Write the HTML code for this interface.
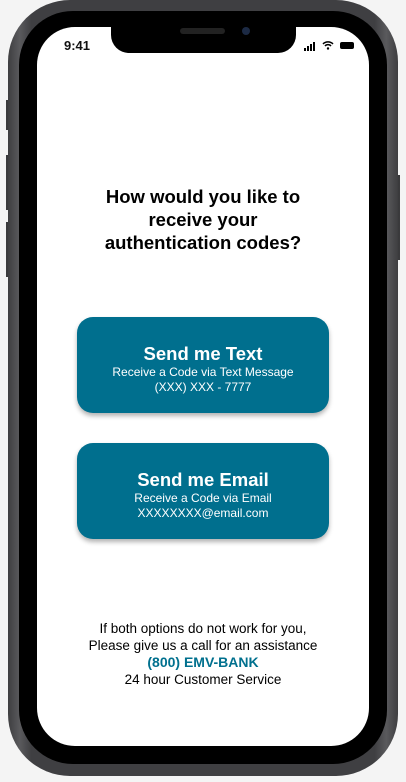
<!DOCTYPE html>
<html><head><style>
body{margin:0;width:406px;height:782px;background:#f4f4f4;position:relative;overflow:hidden;font-family:"Liberation Sans",sans-serif}
.frame{position:absolute;left:8px;top:0;width:390px;height:776px;border-radius:62px;background:linear-gradient(90deg,#3e3e40,#5a5a5d 3%,#3f3f42 6%,#3f3f42 94%,#5a5a5d 97%,#3e3e40)}
.bezel{position:absolute;left:19px;top:11px;width:368px;height:753px;border-radius:54px;background:#000}
.screen{position:absolute;left:37px;top:27px;width:332px;height:719px;border-radius:38px;background:#fff;overflow:hidden}
.notch{position:absolute;left:74px;top:-2px;width:185px;height:28px;background:#000;border-radius:0 0 18px 18px}
.btn{position:absolute;left:40px;width:252px;height:96px;border-radius:16px;background:#006f8e;color:#fff;text-align:center;box-shadow:0 3px 5px rgba(0,0,0,.3)}
.btn b{display:block;font-size:18.5px;margin-top:26px;line-height:22px}
.btn span{display:block;font-size:12px;line-height:15px}
.side{position:absolute;background:#3a3a3c;width:3px}
</style></head><body>
<div class="side" style="left:6px;top:100px;height:30px"></div>
<div class="side" style="left:6px;top:155px;height:55px"></div>
<div class="side" style="left:6px;top:222px;height:55px"></div>
<div class="side" style="left:397px;top:175px;height:85px"></div>
<div class="frame"></div>
<div class="bezel"></div>
<div class="screen">
<div class="notch"><div style="position:absolute;left:69px;top:3px;width:45px;height:6px;border-radius:3px;background:#222"></div><div style="position:absolute;left:131px;top:2px;width:8px;height:8px;border-radius:50%;background:#1c2a44"></div></div>
<div style="position:absolute;left:27px;top:11px;font-size:13px;font-weight:bold;color:#111">9:41</div>
<div style="position:absolute;left:267px;top:15px;display:flex;align-items:flex-end;gap:1px">
<div style="width:2px;height:3px;background:#000"></div><div style="width:2px;height:5px;background:#000"></div><div style="width:2px;height:7px;background:#000"></div><div style="width:2px;height:9px;background:#000"></div></div>
<svg style="position:absolute;left:285px;top:13px" width="12" height="10" viewBox="0 0 12 10"><path d="M1 4a7 7 0 0 1 10 0M3 6a4 4 0 0 1 6 0" stroke="#000" stroke-width="1.5" fill="none"/><circle cx="6" cy="8.5" r="1.2"/></svg>
<div style="position:absolute;left:303px;top:15px;width:14px;height:7px;background:#000;border-radius:2px"></div>
<div style="position:absolute;left:0;width:332px;top:158px;text-align:center;font-size:18.5px;font-weight:bold;line-height:23px;color:#000">How would you like to<br>receive your<br>authentication codes?</div>
<div class="btn" style="top:290px"><b>Send me Text</b><span>Receive a Code via Text Message</span><span>(XXX) XXX - 7777</span></div>
<div class="btn" style="top:416px"><b>Send me Email</b><span>Receive a Code via Email</span><span>XXXXXXXX@email.com</span></div>
<div style="position:absolute;left:0;width:332px;top:593px;text-align:center;font-size:13.5px;line-height:17px;color:#000">If both options do not work for you,<br>Please give us a call for an assistance<br><span style="color:#00708e;font-weight:bold;font-size:14px">(800) EMV-BANK</span><br>24 hour Customer Service</div>
</div>
</body></html>
